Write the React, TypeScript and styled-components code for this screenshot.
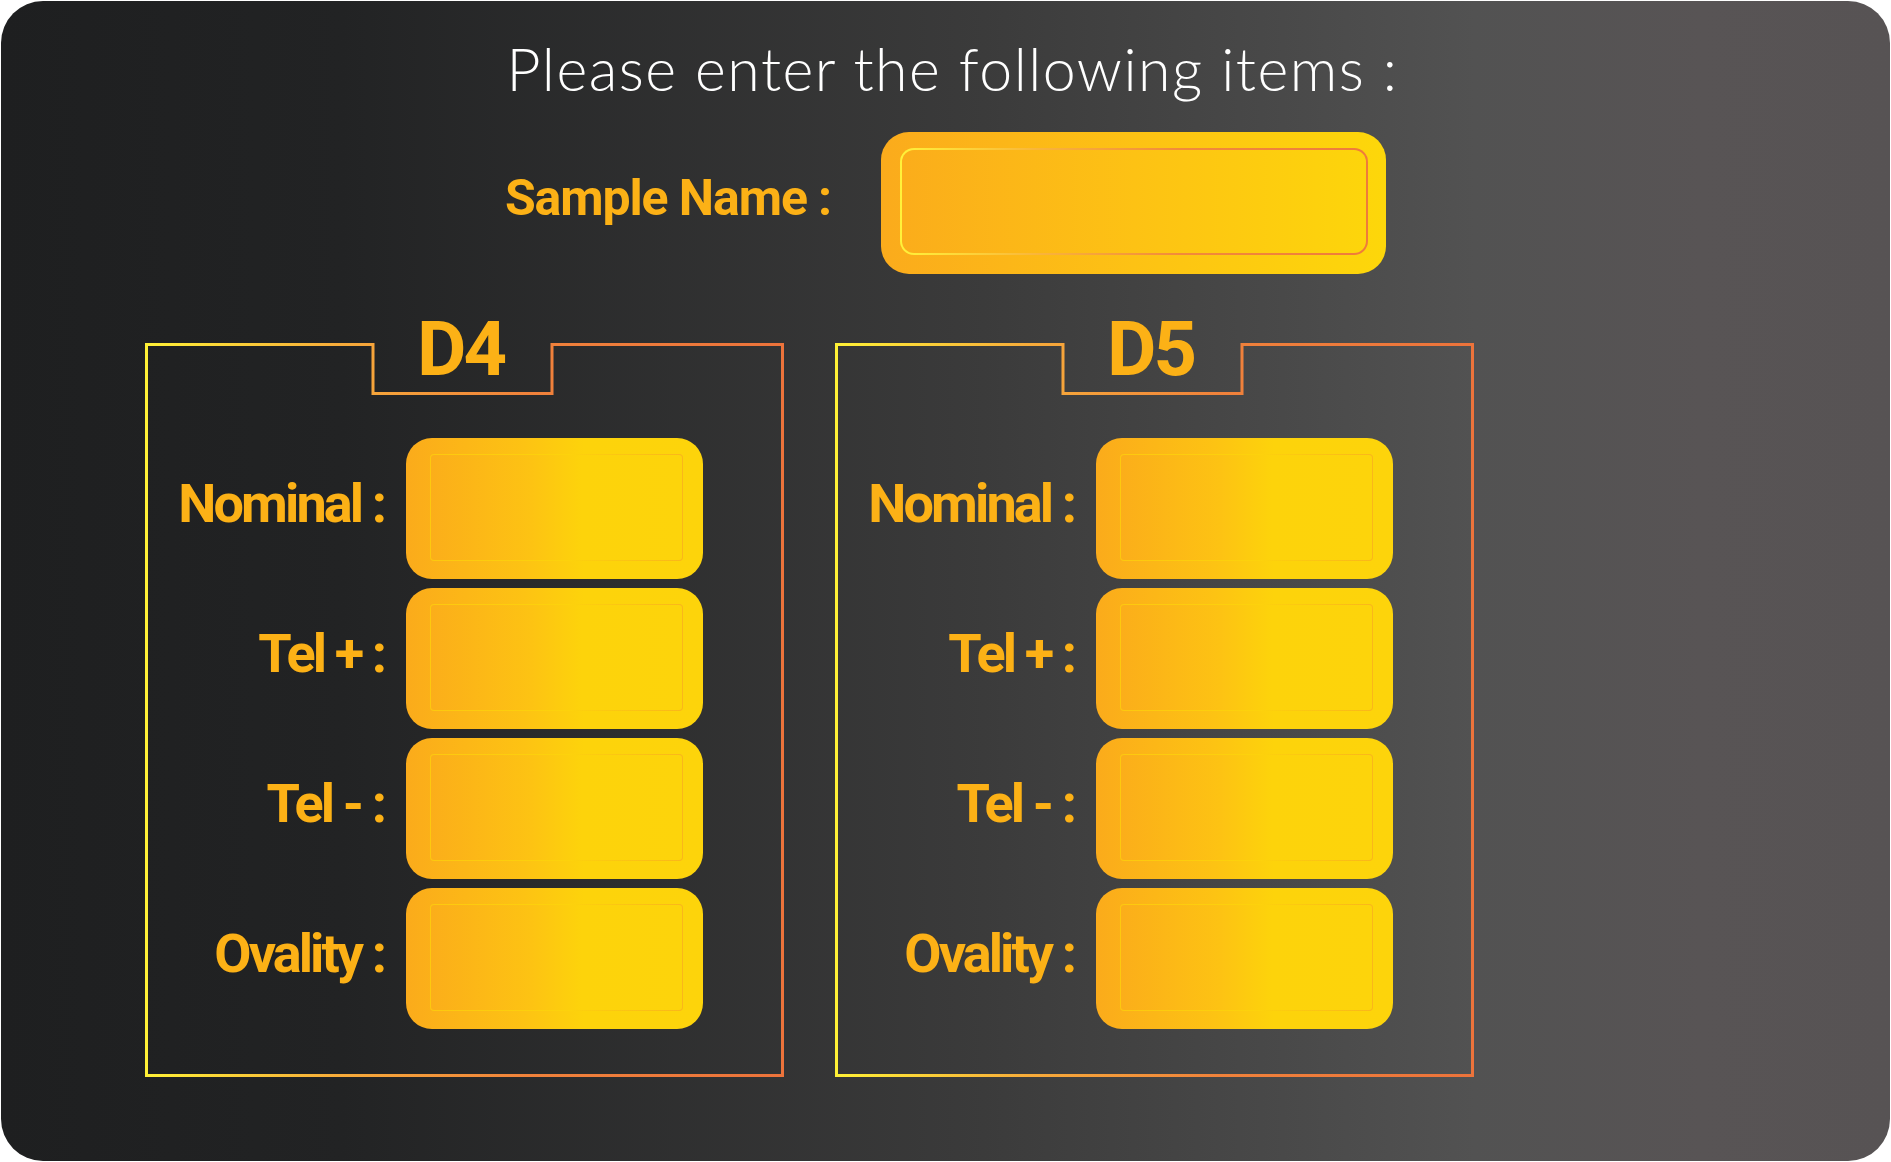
import React, { FC } from 'react';
import styled, { createGlobalStyle } from 'styled-components';

const GlobalStyle = createGlobalStyle`
    html, body {
        margin: 0;
        padding: 0;
        background: #ffffff;
    }
    * {
        box-sizing: border-box;
    }
`;

const Card = styled.div`
    width: 1889px;
    height: 1160px;
    margin: 1px;
    border-radius: 42px;
    background: linear-gradient(90deg, #1e1f20 0%, #222324 18%, #3b3b3b 52%, #525252 78%, #585455 90%, #575354 100%);
    display: flex;
    flex-direction: column;
    padding-top: 38px;
    overflow: hidden;
`;

const Title = styled.h1`
    margin: 0;
    padding-left: 14px;
    font-family: 'Lato', 'Liberation Sans', sans-serif;
    font-weight: 300;
    font-size: 59px;
    letter-spacing: 1.5px;
    line-height: 1;
    color: #ffffff;
    text-align: center;
`;

const SampleRow = styled.div`
    margin-top: 34px;
    display: flex;
    justify-content: center;
    align-items: center;
    gap: 50px;
`;

const Label = styled.label<{ $size: number; $tracking: number }>`
    font-family: 'Roboto', 'Liberation Sans', sans-serif;
    font-weight: 700;
    font-size: ${p => p.$size}px;
    letter-spacing: ${p => p.$tracking}px;
    line-height: 1;
    color: #fcb116;
    white-space: nowrap;
    margin-bottom: 10px;
`;

const SampleShell = styled.div`
    width: 505px;
    height: 142px;
    border-radius: 28px;
    background: linear-gradient(90deg, #fbab1c 0%, #fdc214 50%, #fdd70a 100%);
    padding: 16px 18px 19px 19px;
    display: flex;
`;

const SampleInput = styled.input`
    flex: 1;
    width: 100%;
    border-radius: 14px;
    border: 2.5px solid transparent;
    background:
        linear-gradient(90deg, #fbad1b 0%, #fdc214 50%, #fdd50b 100%) padding-box,
        linear-gradient(90deg, #fff23a 0%, #f9b43a 30%, #f28a3a 60%, #ef7b3b 100%) border-box;
    outline: none;
    font: 600 40px 'Roboto', sans-serif;
    color: #3a2a00;
    padding: 0 20px;
`;

const Panels = styled.div`
    margin-top: 69px;
    padding-left: 144px;
    display: flex;
    gap: 51px;
`;

const Panel = styled.section`
    position: relative;
    width: 639px;
    height: 734px;
    display: flex;
    flex-direction: column;
`;

const Frame = styled.svg`
    position: absolute;
    inset: 0;
    pointer-events: none;
`;

const Heading = styled.h2`
    margin: -32px 0 0 0;
    align-self: center;
    padding-right: 8px;
    font-family: 'Roboto', 'Liberation Sans', sans-serif;
    font-weight: 700;
    font-size: 76px;
    letter-spacing: -3px;
    line-height: 1;
    color: #fcb116;
`;

const Rows = styled.div`
    margin-top: 51px;
    display: grid;
    grid-template-columns: 239px 297px;
    grid-auto-rows: 141px;
    column-gap: 22px;
    row-gap: 9px;
`;

const RowLabel = styled(Label)`
    align-self: center;
    justify-self: end;
`;

const Field = styled.div`
    border-radius: 26px;
    background: linear-gradient(90deg, #fbab1b 0%, #fdc313 40%, #fdd30b 60%, #fdd40b 100%);
    padding: 16px 20px 18px 24px;
    display: flex;
`;

const FieldInput = styled.input`
    flex: 1;
    width: 100%;
    border-radius: 4px;
    border: 1.5px solid transparent;
    background:
        linear-gradient(90deg, #fbae1a 0%, #fdc313 40%, #fdd30b 60%, #fdd40b 100%) padding-box,
        linear-gradient(90deg, #fdc90f 0%, #fdd20c 55%, #fab61a 100%) border-box;
    outline: none;
    font: 600 36px 'Roboto', sans-serif;
    color: #3a2a00;
    padding: 0 14px;
`;

const PanelFrame: FC<{ id: string }> = ({ id }) => (
    <Frame width="639" height="734" viewBox="0 0 639 734">
        <defs>
            <linearGradient id={id} x1="0" y1="0" x2="639" y2="0" gradientUnits="userSpaceOnUse">
                <stop offset="0" stopColor="#fff136" />
                <stop offset="0.3" stopColor="#f7ac3a" />
                <stop offset="0.6" stopColor="#f0823b" />
                <stop offset="1" stopColor="#ec733b" />
            </linearGradient>
        </defs>
        <path
            d="M1.5 1.5 H228 V50.5 H407 V1.5 H637.5 V732.5 H1.5 Z"
            fill="none"
            stroke={`url(#${id})`}
            strokeWidth="3"
        />
    </Frame>
);

const fields = ['Nominal :', 'Tel + :', 'Tel - :', 'Ovality :'];

const DimensionPanel: FC<{ name: string }> = ({ name }) => (
    <Panel>
        <PanelFrame id={`frame-${name}`} />
        <Heading>{name}</Heading>
        <Rows>
            {fields.map(f => (
                <React.Fragment key={f}>
                    <RowLabel $size={54} $tracking={-2.9}>{f}</RowLabel>
                    <Field>
                        <FieldInput aria-label={`${name} ${f}`} />
                    </Field>
                </React.Fragment>
            ))}
        </Rows>
    </Panel>
);

export default function App() {
    return (
        <>
            <GlobalStyle />
            <Card>
                <Title>Please enter the following items :</Title>
                <SampleRow>
                    <Label $size={50} $tracking={-1.1}>Sample Name :</Label>
                    <SampleShell>
                        <SampleInput aria-label="Sample Name" />
                    </SampleShell>
                </SampleRow>
                <Panels>
                    <DimensionPanel name="D4" />
                    <DimensionPanel name="D5" />
                </Panels>
            </Card>
        </>
    );
}
